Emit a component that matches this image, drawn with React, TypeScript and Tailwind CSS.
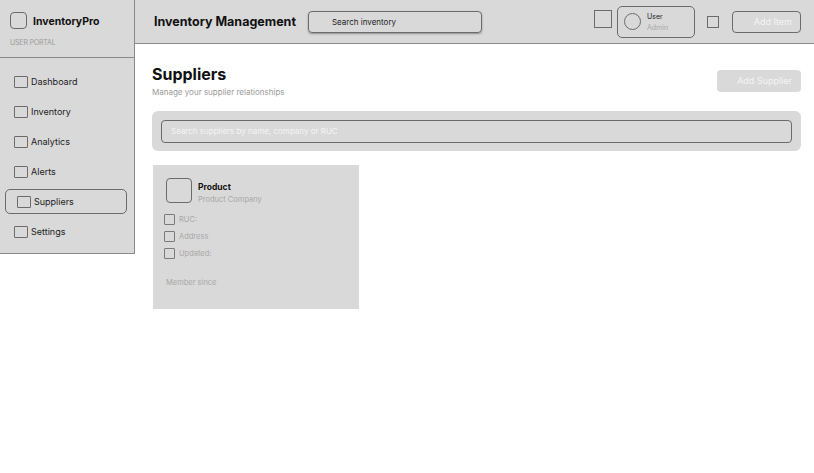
import React from "react";

const NavItem = ({ label, active }: { label: string; active?: boolean }) => (
  <div
    className={
      "flex h-[25px] items-center gap-[3px] rounded-[5px] " +
      (active ? "border border-[#6b6b6b] pl-[11px]" : "pl-[9px]")
    }
  >
    <div className="h-[12px] w-[14px] border border-[#6b6b6b] rounded-[1px]" />
    <span className="text-[9px] text-[#222]">{label}</span>
  </div>
);

const Row = ({ label }: { label: string }) => (
  <div className="flex items-center gap-[4px] h-[11px]">
    <div className="h-[11px] w-[11px] border border-[#7a7a7a] rounded-[1px]" />
    <span className="text-[7.5px] text-[#a8a8a8]">{label}</span>
  </div>
);

export default function App() {
  return (
    <div
      className="flex w-[814px] h-[473px] bg-white overflow-hidden"
      style={{ fontFamily: "Inter, 'Liberation Sans', sans-serif" }}
    >
      {/* Sidebar */}
      <div className="w-[135px] h-[254px] shrink-0 bg-[#d9d9d9] border-r border-b border-[#8a8a8a] flex flex-col">
        <div className="h-[58px] border-b border-[#8a8a8a] pl-[10px] pt-[11px]">
          <div className="flex items-center gap-[6px]">
            <div className="h-[17px] w-[17px] rounded-[4px] border border-[#6b6b6b]" />
            <span className="text-[10.5px] font-bold text-[#111] mt-[3px]">InventoryPro</span>
          </div>
          <div className="mt-[8px] text-[7px] text-[#9a9a9a] tracking-tight">USER PORTAL</div>
        </div>
        <div className="flex flex-col gap-[5px] pl-[5px] pr-[7px] pt-[11px]">
          <NavItem label="Dashboard" />
          <NavItem label="Inventory" />
          <NavItem label="Analytics" />
          <NavItem label="Alerts" />
          <NavItem label="Suppliers" active />
          <NavItem label="Settings" />
        </div>
      </div>

      {/* Right */}
      <div className="flex-1 flex flex-col">
        <div className="h-[44px] bg-[#d9d9d9] border-b border-[#8a8a8a] flex items-center pl-[19px] pr-[13px]">
          <span className="text-[12.5px] font-bold text-[#111] mt-[2px]">Inventory Management</span>
          <div className="ml-[12px] h-[22px] w-[174px] rounded-[4px] border border-[#6b6b6b] shadow-[0_1px_2px_rgba(0,0,0,0.35)] flex items-center pl-[23px]">
            <span className="text-[8px] text-[#222]">Search inventory</span>
          </div>
          <div className="ml-auto flex items-center">
            <div className="h-[18px] w-[18px] border border-[#6b6b6b] mb-[6px]" />
            <div className="ml-[5px] h-[32px] w-[78px] rounded-[5px] border border-[#6b6b6b] flex items-center pl-[6px] gap-[6px]">
              <div className="h-[17px] w-[17px] rounded-full border border-[#6b6b6b]" />
              <div className="flex flex-col leading-[11px]">
                <span className="text-[7px] text-[#222]">User</span>
                <span className="text-[7px] text-[#a8a8a8]">Admin</span>
              </div>
            </div>
            <div className="ml-[12px] h-[12px] w-[12px] border border-[#6b6b6b]" />
            <div className="ml-[13px] h-[22px] w-[69px] rounded-[4px] border border-[#6b6b6b] flex items-center justify-end pr-[8px]">
              <span className="text-[9px] text-[#f4f4f4]">Add Item</span>
            </div>
          </div>
        </div>

        <div className="pl-[17px] pr-[13px] pt-[21px]">
          <div className="flex items-start justify-between">
            <div>
              <div className="text-[16px] font-bold text-[#111] leading-[18px]">Suppliers</div>
              <div className="mt-[3px] text-[8px] text-[#9a9a9a]">Manage your supplier relationships</div>
            </div>
            <div className="mt-[5px] h-[22px] w-[84px] rounded-[4px] bg-[#d9d9d9] flex items-center justify-end pr-[9px]">
              <span className="text-[9px] text-[#f4f4f4]">Add Supplier</span>
            </div>
          </div>

          <div className="mt-[13px] h-[40px] rounded-[6px] bg-[#d9d9d9] flex items-center px-[9px]">
            <div className="h-[23px] w-full rounded-[4px] border border-[#6b6b6b] flex items-center pl-[9px]">
              <span className="text-[8px] text-[#f4f4f4]">Search suppliers by name, company or RUC</span>
            </div>
          </div>

          <div className="mt-[14px] ml-[1px] w-[206px] h-[144px] bg-[#d9d9d9] pl-[11px] pt-[13px]">
            <div className="flex items-start gap-[6px] pl-[2px]">
              <div className="h-[25px] w-[26px] rounded-[4px] border border-[#6b6b6b]" />
              <div className="flex flex-col pt-[3px]">
                <span className="text-[8.5px] font-bold text-[#111] leading-[12px]">Product</span>
                <span className="text-[7.5px] text-[#a8a8a8] mt-[1px]">Product Company</span>
              </div>
            </div>
            <div className="mt-[9px] flex flex-col gap-[6px]">
              <Row label="RUC:" />
              <Row label="Address" />
              <Row label="Updated:" />
            </div>
            <div className="mt-[18px] pl-[2px] text-[7.5px] text-[#a8a8a8]">Member since</div>
          </div>
        </div>
      </div>
    </div>
  );
}
